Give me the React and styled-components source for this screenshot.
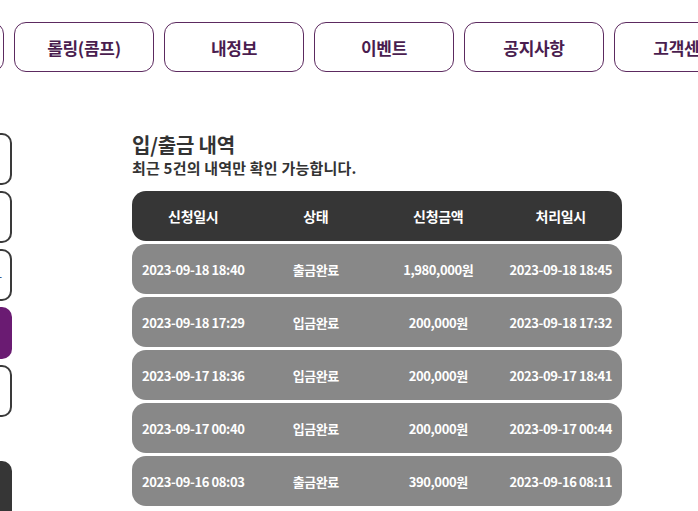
import React from 'react'
import styled, { createGlobalStyle } from 'styled-components'

const GlobalStyle = createGlobalStyle`
  html, body {
    margin: 0;
    padding: 0;
    background: #fff;
  }
  body {
    font-family: 'Noto Sans CJK KR', 'Noto Sans', sans-serif;
  }
`

const menus = ['', '롤링(콤프)', '내정보', '이벤트', '공지사항', '고객센터']

const sideItems = [
  { kind: 'line' },
  { kind: 'line' },
  { kind: 'line', mark: true },
  { kind: 'active' },
  { kind: 'line' }
]

const history = [
  ['2023-09-18 18:40', '출금완료', '1,980,000원', '2023-09-18 18:45'],
  ['2023-09-18 17:29', '입금완료', '200,000원', '2023-09-18 17:32'],
  ['2023-09-17 18:36', '입금완료', '200,000원', '2023-09-17 18:41'],
  ['2023-09-17 00:40', '입금완료', '200,000원', '2023-09-17 00:44'],
  ['2023-09-16 08:03', '출금완료', '390,000원', '2023-09-16 08:11']
]

const App = () => {
  return (
    <Page>
      <GlobalStyle />
      <TopNav>
        {menus.map((m, i) => (
          <NavButton key={i}>{m}</NavButton>
        ))}
      </TopNav>
      <Body>
        <SideBar>
          {sideItems.map((s, i) => (
            <SideItem key={i} $active={s.kind === 'active'}>
              {s.mark && <SideMark>-</SideMark>}
            </SideItem>
          ))}
          <SideDark />
        </SideBar>
        <Content>
          <Title>입/출금 내역</Title>
          <SubTitle>최근 5건의 내역만 확인 가능합니다.</SubTitle>
          <Table>
            <HeadRow>
              <Cell>신청일시</Cell>
              <Cell>상태</Cell>
              <Cell>신청금액</Cell>
              <Cell>처리일시</Cell>
            </HeadRow>
            {history.map((r, i) => (
              <Row key={i}>
                {r.map((c, j) => (
                  <Cell key={j} $small>{c}</Cell>
                ))}
              </Row>
            ))}
          </Table>
        </Content>
      </Body>
    </Page>
  )
}

const Page = styled.div`
  width: 698px;
  height: 511px;
  overflow: hidden;
  background: #fff;
`

const TopNav = styled.nav`
  display: flex;
  gap: 10px;
  margin-left: -136px;
  padding-top: 22px;
`

const NavButton = styled.div`
  flex: 0 0 140px;
  height: 50px;
  box-sizing: border-box;
  border: 1px solid #5c2a60;
  border-radius: 12px;
  display: flex;
  align-items: center;
  justify-content: center;
  color: #4a1d4f;
  font-size: 17px;
  font-weight: 700;
  letter-spacing: -0.3px;
  white-space: nowrap;
`

const Body = styled.div`
  display: flex;
  gap: 120px;
  margin-top: 61px;
`

const SideBar = styled.div`
  flex: 0 0 150px;
  margin-left: -138px;
  display: flex;
  flex-direction: column;
  gap: 6px;
`

const SideItem = styled.div`
  position: relative;
  height: 52px;
  box-sizing: border-box;
  border-radius: 10px;
  border: ${p => (p.$active ? 'none' : '2px solid #3a3a3a')};
  background: ${p => (p.$active ? '#6a1b72' : '#fff')};
`

const SideMark = styled.span`
  position: absolute;
  right: 8px;
  top: 14px;
  color: #3b5a8a;
  font-size: 14px;
`

const SideDark = styled.div`
  height: 80px;
  margin-top: 38px;
  border-radius: 10px;
  background: #363636;
`

const Content = styled.div`
  width: 490px;
  color: #333;
`

const Title = styled.h2`
  margin: 0;
  font-size: 20px;
  font-weight: 700;
  line-height: 24px;
  letter-spacing: -0.2px;
`

const SubTitle = styled.p`
  margin: 1px 0 0;
  font-size: 15px;
  font-weight: 700;
  line-height: 20px;
  letter-spacing: 0.2px;
`

const Table = styled.div`
  margin-top: 13px;
  display: flex;
  flex-direction: column;
  gap: 3px;
`

const HeadRow = styled.div`
  display: grid;
  grid-template-columns: repeat(4, 1fr);
  height: 50px;
  border-radius: 14px;
  background: #363636;
  align-items: center;
`

const Row = styled(HeadRow)`
  background: #888888;
`

const Cell = styled.div`
  text-align: center;
  color: #fff;
  font-weight: 700;
  font-size: ${p => (p.$small ? '13px' : '14px')};
  letter-spacing: ${p => (p.$small ? '-0.4px' : '-0.3px')};
  white-space: nowrap;
`

export default App
